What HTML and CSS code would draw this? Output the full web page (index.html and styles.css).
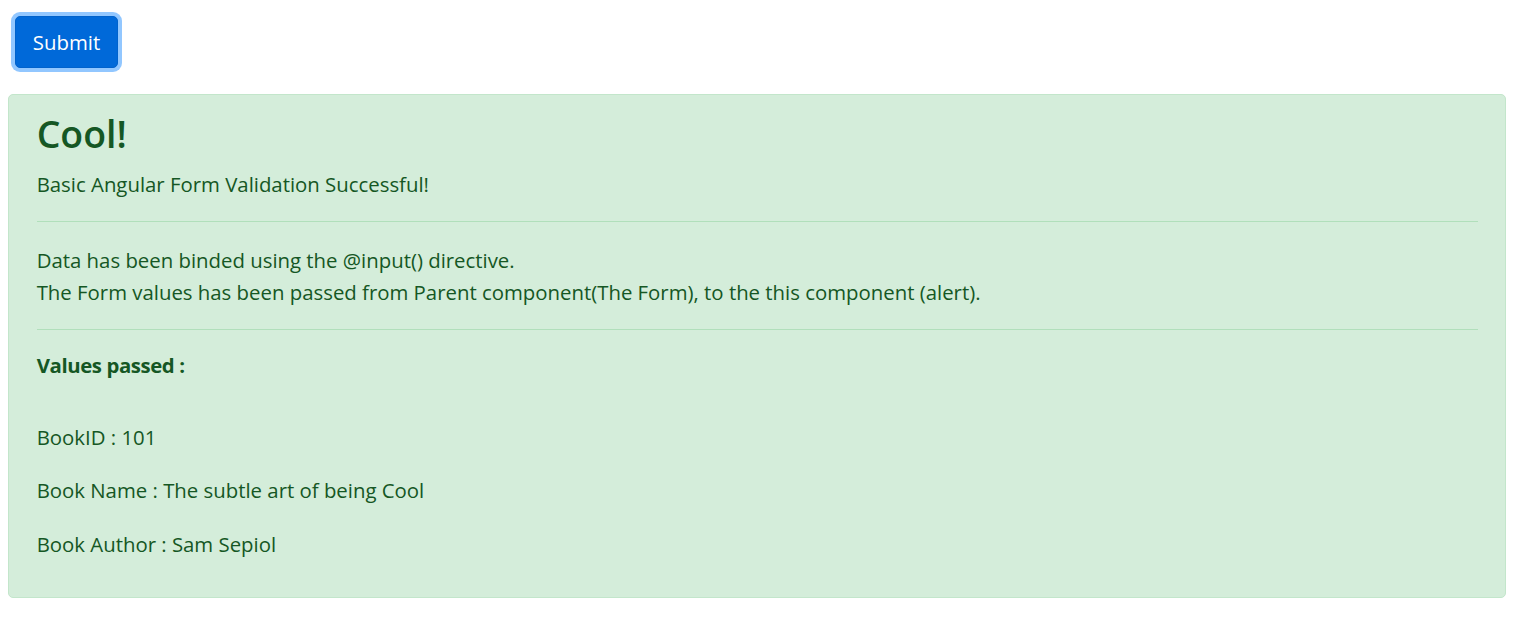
FILE: index.html
```html
<!DOCTYPE html>
<html lang="en">
<head>
<meta charset="utf-8">
<title>Book Form</title>
<link rel="stylesheet" href="styles.css">
</head>
<body>
<div class="page">
  <div class="actions">
    <button class="btn-submit" type="submit">Submit</button>
  </div>
  <div class="alert">
    <h3 class="alert-heading">Cool!</h3>
    <p class="para para-intro">Basic Angular Form Validation Successful!</p>
    <hr class="rule rule-first">
    <p class="para para-info">Data has been binded using the @input() directive.<br>The Form values has been passed from Parent component(The Form), to the this component (alert).</p>
    <hr class="rule rule-second">
    <p class="para values-title"><strong>Values passed :</strong></p>
    <p class="para">BookID : 101</p>
    <p class="para">Book Name : The subtle art of being Cool</p>
    <p class="para">Book Author : Sam Sepiol</p>
  </div>
</div>
</body>
</html>
```
FILE: styles.css
```css
html, body {
  background: #ffffff;
}
body {
  margin: 0;
  font-family: "Open Sans", "Noto Sans", sans-serif;
  font-size: 20.36px;
  line-height: 32px;
  color: #212529;
}
.page {
  width: 1498px;
  padding: 16px 0 0 8px;
}
.actions {
  display: flex;
  padding-left: 7px;
  margin-bottom: 26px;
}
.btn-submit {
  font-family: inherit;
  font-size: 20.36px;
  line-height: 32px;
  color: #ffffff;
  background: #0069d9;
  border: 1px solid #0062cc;
  border-radius: 5px;
  padding: 9px 15px;
  width: 103px;
  height: 52px;
  box-shadow: 0 0 0 4px rgba(38, 143, 255, 0.5);
  cursor: pointer;
}
.alert {
  box-sizing: border-box;
  width: 1498px;
  background: #d4edda;
  border: 1px solid #c3e6cb;
  border-radius: 5px;
  color: #155724;
  padding: 16px 26.67px 16px 27.67px;
}
.alert-heading {
  margin: 0 0 13px;
  padding-top: 2px;
  font-size: 37.4px;
  font-weight: 600;
  line-height: 42px;
  color: #155724;
}
.para {
  margin: 0 0 21.33px;
}
.para-intro {
  margin-bottom: 21px;
}
.para-info {
  line-height: 31.5px;
  margin-bottom: 21px;
}
.rule {
  margin: 0;
  border: 0;
  border-top: 1px solid #b1dfbb;
  height: 0;
}
.rule-first {
  margin-bottom: 23px;
}
.rule-second {
  margin-bottom: 19px;
}
.values-title {
  margin-bottom: 40px;
}
.values-title strong {
  font-weight: 700;
  letter-spacing: -0.4px;
}
```
